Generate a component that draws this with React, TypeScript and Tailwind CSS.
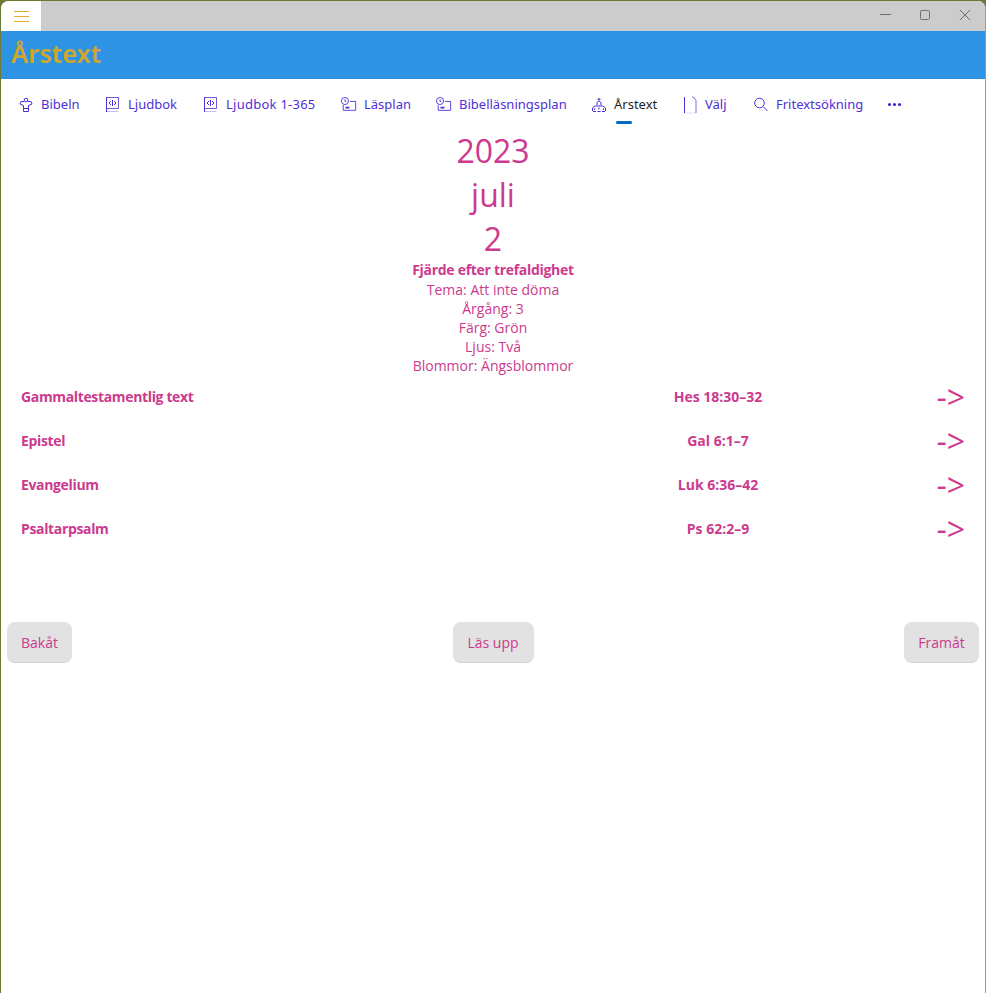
import React from 'react';
import { Minus, Square, X } from 'lucide-react';

const navColor = '#4f2fd8';

const IconBible = () => (
  <svg width="16" height="16" viewBox="0 0 16 16" fill="none" stroke="currentColor" strokeWidth="1">
    <circle cx="8" cy="3" r="1.800" />
    <path d="M6.300 4.500H3L2 7l3.500 1.500V14.500h5V8.500L14 7l-1-2.500H9.700" />
    <path d="M5.500 11.500h5" />
  </svg>
);

const IconAudio = () => (
  <svg width="16" height="18" viewBox="0 0 16 18" fill="none" stroke="currentColor" strokeWidth="1">
    <path d="M1.500 1v15" />
    <path d="M1.500 12.500h12V1.500h-12" opacity="0.8" />
    <path d="M1.500 15.500h12" opacity="0.3" />
    <path d="M7.500 4v6M6 5 4 7l2 2M9 5l2 2-2 2" />
  </svg>
);

const IconPlan = () => (
  <svg width="18" height="18" viewBox="0 0 18 18" fill="none" stroke="currentColor" strokeWidth="1">
    <circle cx="4.500" cy="4.500" r="4" />
    <path d="M4.500 2.500v2.500h1.500M10 5h6.500v10H2.500V9" />
    <path d="M5 12h4.500" strokeWidth="2" />
  </svg>
);

const IconChurch = () => (
  <svg width="16" height="16" viewBox="0 0 16 16" fill="none" stroke="currentColor" strokeWidth="1">
    <path d="M8 1v2.500M6.500 2.200h3M6 8V5.500L8 4l2 1.500V8M1.500 14v-3L4 9h8l2.500 2v3" />
    <path d="M2 14.500h3M6.500 14.500h3M11 14.500h3M3.500 11.500v1.500M8 10.500v2M12.500 11.500v1.500" />
  </svg>
);

const IconPage = () => (
  <svg width="16" height="18" viewBox="0 0 16 18" fill="none" stroke="currentColor" strokeWidth="1">
    <path d="M2.500 1v16" />
    <path d="M10 1h1.500l2.500 3.500V17" opacity="0.7" />
    <path d="M2.500 17H14" opacity="0.15" />
  </svg>
);

const IconSearch = () => (
  <svg width="16" height="16" viewBox="0 0 16 16" fill="none" stroke="currentColor" strokeWidth="1">
    <circle cx="6.500" cy="6" r="4.800" />
    <path d="m10 9.500 4.500 4.500" />
  </svg>
);

const navItems = [
  { label: 'Bibeln', width: 'w-[39px]', icon: <IconBible /> },
  { label: 'Ljudbok', width: 'w-[50px]', icon: <IconAudio /> },
  { label: 'Ljudbok 1-365', width: 'w-[90px] tracking-[0.25px]', icon: <IconAudio /> },
  { label: 'Läsplan', width: 'w-[47px]', icon: <IconPlan /> },
  { label: 'Bibelläsningsplan', width: 'w-[107px]', icon: <IconPlan /> },
  { label: 'Årstext', width: 'w-[43px]', icon: <IconChurch />, active: true },
  { label: 'Välj', width: 'w-[23px]', icon: <IconPage /> },
  { label: 'Fritextsökning', width: 'w-[87px]', icon: <IconSearch /> },
];

const readings = [
  { title: 'Gammaltestamentlig text', ref: 'Hes 18:30–32' },
  { title: 'Epistel', ref: 'Gal 6:1–7' },
  { title: 'Evangelium', ref: 'Luk 6:36–42' },
  { title: 'Psaltarpsalm', ref: 'Ps 62:2–9' },
];

const PinkButton: React.FC<{ label: string; className: string }> = ({ label, className }) => (
  <button className={`h-[41px] rounded-lg border-b border-[#d4d4d4] bg-[#e2e2e2] pt-px text-sm text-[#cc3a8e] ${className}`}>{label}</button>
);

export default function App() {
  return (
    <div className="h-[993px] w-[986px] overflow-hidden bg-[#6b7a35] pl-px pt-px font-['Open_Sans',sans-serif]">
      <div className="flex h-full w-[985px] flex-col overflow-hidden rounded-t-lg border-r border-[#9a9a9a] bg-white">
        <div className="flex h-[30px] shrink-0 items-center bg-[#cccccc]">
          <div className="flex h-full w-10 flex-col items-center justify-center gap-[4px] bg-white">
            <span className="h-px w-[15px] bg-[#e0b030]" />
            <span className="h-px w-[15px] bg-[#e0b030]" />
            <span className="h-px w-[15px] bg-[#e0b030]" />
          </div>
          <div className="ml-auto flex items-center pb-[3px] text-[#666666]">
            <span className="flex w-10 justify-center"><Minus size={17} strokeWidth={1.3} /></span>
            <span className="flex w-10 justify-center"><Square size={12} strokeWidth={1.8} /></span>
            <span className="flex w-10 justify-center"><X size={20} strokeWidth={1.1} /></span>
          </div>
        </div>

        <div className="flex h-[48px] shrink-0 items-center bg-[#2d93e2] pb-[3px] pl-[10px]">
          <h1 className="font-['Noto_Sans',sans-serif] text-[25.5px] font-semibold text-[#d0a62e]">Årstext</h1>
        </div>

        <nav className="flex h-[50px] shrink-0 items-center gap-[25px] pl-[17px] pt-px font-['Noto_Sans',sans-serif] text-[13px]" style={{ color: navColor }}>
          {navItems.map((item) => (
            <div key={item.label} className="relative flex h-full items-center gap-[7px]">
              <span className="flex w-4 justify-center">{item.icon}</span>
              <span className={`whitespace-nowrap ${item.width} ${item.active ? 'text-[#1f1f1f]' : ''}`}>{item.label}</span>
              {item.active && (
                <span className="absolute bottom-[5px] left-[25px] h-[3px] w-4 rounded-full bg-[#0067c0]" />
              )}
            </div>
          ))}
          <div className="flex items-center gap-[2px]">
            <span className="h-[3px] w-[3px] rounded-full bg-[#3a1fd0]" />
            <span className="h-[3px] w-[3px] rounded-full bg-[#3a1fd0]" />
            <span className="h-[3px] w-[3px] rounded-full bg-[#3a1fd0]" />
          </div>
        </nav>

        <main className="flex flex-col text-[#cc3a8e]">
          <div className="flex flex-col items-center text-center">
            <div className="h-[44px] text-[32px] leading-[44px]">2023</div>
            <div className="h-[44px] text-[32px] leading-[44px]">juli</div>
            <div className="h-[44px] text-[32px] leading-[44px]">2</div>
            <div className="h-[19px] text-sm font-bold leading-[17px] tracking-[-0.3px]">Fjärde efter trefaldighet</div>
            <div className="h-[19px] text-sm leading-[19px]">Tema: Att inte döma</div>
            <div className="h-[19px] text-sm leading-[19px]">Årgång: 3</div>
            <div className="h-[19px] text-sm leading-[19px]">Färg: Grön</div>
            <div className="h-[19px] text-sm leading-[19px]">Ljus: Två</div>
            <div className="h-[19px] text-sm leading-[19px]">Blommor: Ängsblommor</div>
          </div>

          <div className="flex flex-col">
            {readings.map((r) => (
              <div key={r.title} className="grid h-[44px] grid-cols-[580px_234px_1fr] items-center pl-5 text-sm font-bold">
                <span className="tracking-[-0.35px]">{r.title}</span>
                <span className="text-center">{r.ref}</span>
                <span className="pr-[20px] text-right text-[32px] font-medium leading-none">-&gt;</span>
              </div>
            ))}
          </div>

          <div className="mt-[71px] grid grid-cols-3 items-center px-[6px]">
            <PinkButton label="Bakåt" className="w-[65px] justify-self-start" />
            <PinkButton label="Läs upp" className="w-[81px] justify-self-center" />
            <PinkButton label="Framåt" className="w-[75px] justify-self-end" />
          </div>
        </main>
      </div>
    </div>
  );
}
